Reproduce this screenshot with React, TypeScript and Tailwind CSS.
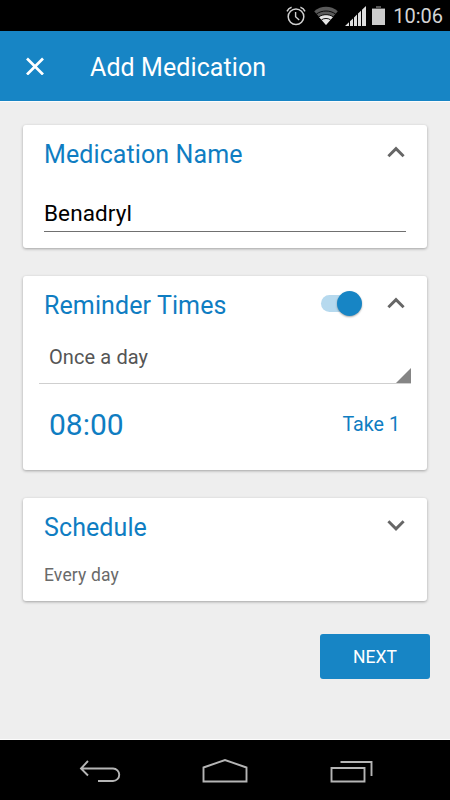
import type { ReactNode } from "react";

function StatusBar() {
  return (
    <div className="flex h-[31px] items-center justify-end bg-black pr-[7px] pt-px">
      {/* Alarm */}
      <svg className="mr-2 h-5 w-5" viewBox="0 0 20 20" fill="none" stroke="#d0d0d0" strokeWidth="1.5">
        <circle cx="10" cy="10.8" r="7.8" />
        <path d="M9.6 6v4.8l3.6 3.2" strokeWidth="1.4" />
        <path d="M1 5.4C1.8 3.5 3.5 1.8 5.6 1.2M19 5.4C18.2 3.5 16.5 1.8 14.4 1.2" />
      </svg>
      {/* Wifi */}
      <svg className="mr-[7px] h-5 w-6" viewBox="0 0 24 20">
        <path d="M12 19 0.2 5.2C7 -0.6 17 -0.6 23.8 5.2Z" fill="#5a5a5a" />
        <path d="M12 19 5 10.9C9 8 15 8 19 10.9Z" fill="#e6e6e6" />
        <path d="M2.4 8C8 4 16 4 21.6 8M5 10.7C9 8 15 8 19 10.7M7.5 13.8C10 12 14 12 16.5 13.8" fill="none" stroke="#000" strokeWidth="0.9" />
      </svg>
      {/* Signal */}
      <svg className="mr-[6px] h-5 w-[21px]" viewBox="0 0 21 20">
        <path d="M0 20 4 16.2V20ZM5 20V15.2L8 12.4V20ZM9 20V11.4L12 8.6V20ZM13 20V7.6L16 4.8V20ZM17 20V3.8L21 0V20Z" fill="#dedede" />
      </svg>
      {/* Battery */}
      <svg className="mr-2 h-5 w-[13px]" viewBox="0 0 13 20">
        <path d="M4 0h5v2h4v1.5H0V2h4Z" fill="#555" />
        <path d="M0 3H13V19H0Z" fill="#cccccc" />
      </svg>
      <span className="text-[20px] leading-[31px] text-[#d4d4d4]">10:06</span>
    </div>
  );
}

function Chevron({ open }: { open: boolean }) {
  return (
    <svg className="h-[12px] w-[18px]" viewBox="0 0 18 12" fill="none" stroke="#666666" strokeWidth="2.9">
      <path d={open ? "M1.4 10.2 9 2.6 16.6 10.2" : "M1.4 2.3 9 9.9 16.6 2.3"} />
    </svg>
  );
}

function Card({ className, children }: { className: string; children: ReactNode }) {
  return (
    <section className={`rounded-[3px] bg-white shadow-[0_1px_3px_rgba(0,0,0,0.32)] ${className}`}>
      {children}
    </section>
  );
}

function CardHeader({ title, open, children }: { title: string; open: boolean; children?: ReactNode }) {
  return (
    <div className="flex h-[60px] items-start pl-[21px] pr-[22px]">
      <h2 className="flex-1 text-[25px] leading-[60px] tracking-[0.1px] text-[#0f7dc2]">{title}</h2>
      <div className="flex h-[54px] items-center">
        {children}
        <Chevron open={open} />
      </div>
    </div>
  );
}

function Toggle() {
  return (
    <div className="mr-[25px] flex h-[26px] w-[41px] items-center justify-end">
      <div className="-mr-[20px] h-[17px] w-[36px] rounded-full bg-[#b6d9ee]" />
      <div className="relative h-[25px] w-[25px] rounded-full bg-[#1785c5] shadow-[0_1px_2px_rgba(0,0,0,0.35)]" />
    </div>
  );
}

export default function App() {
  return (
    <div className="flex h-[800px] w-[450px] flex-col overflow-hidden bg-[#eeeeee] font-['Roboto',sans-serif]">
      <StatusBar />

      <header className="flex h-[70px] items-center bg-[#1785c5] pl-[26px] text-white">
        <svg className="h-[18px] w-[18px]" viewBox="0 0 18 18" fill="none" stroke="currentColor" strokeWidth="2.7">
          <path d="M1 1.5 17 17.5M17 1.5 1 17.5" />
        </svg>
        <h1 className="ml-[46px] pt-[4px] text-[25px] leading-[70px] tracking-[0.09px]">Add Medication</h1>
      </header>

      <main className="flex-1 border-y border-white/80 px-[23px] pt-[23px]">
        <Card className="h-[123px]">
          <CardHeader title="Medication Name" open />
          <div className="mx-[21px] h-[47px] border-b border-[#707070] pt-[8px] text-[22.5px] leading-[41px] tracking-[0.1px] text-black">
            Benadryl
          </div>
        </Card>

        <Card className="mt-7 h-[194px]">
          <CardHeader title="Reminder Times" open>
            <Toggle />
          </CardHeader>
          <div className="mx-4 flex h-[48px] items-end justify-between border-b border-[#cfcfcf] pl-[10px]">
            <span className="text-[20px] leading-[52px] tracking-[0.1px] text-[#555555]">Once a day</span>
            <svg className="h-[15px] w-[15px]" viewBox="0 0 15 15">
              <path d="M15 0V15H0Z" fill="#858585" />
            </svg>
          </div>
          <div className="flex h-[82px] items-center justify-between pl-[26px] pr-[27px] text-[#0f7dc2]">
            <span className="pb-[2px] text-[30px]">08:00</span>
            <span className="text-[19.7px]">Take 1</span>
          </div>
        </Card>

        <Card className="mt-7 h-[103px]">
          <CardHeader title="Schedule" open={false} />
          <p className="pl-[21px] text-[17.5px] leading-[34px] tracking-[0.15px] text-[#6a6a6a]">Every day</p>
        </Card>

        <div className="-mr-[3px] mt-[33px] flex justify-end">
          <button className="h-[45px] w-[110px] rounded-[3px] bg-[#1785c5] pt-[2px] text-[17.5px] text-white">NEXT</button>
        </div>
      </main>

      <nav className="flex h-[60px] items-center bg-black pl-[79px] pt-[3px]">
        <svg className="h-[26px] w-[42px]" viewBox="0 0 42 26" fill="none" stroke="#b5b5b5" strokeWidth="1.9">
          <path d="M9 2 2 9.5 9 16.5M2 9.5H34A6.2 6.2 0 0 1 34 22H19" />
        </svg>
        <svg className="ml-[80px] h-[26px] w-[48px]" viewBox="0 0 48 26" fill="none" stroke="#b5b5b5" strokeWidth="1.9">
          <path d="M2.5 8.5 24 1 45.5 8.5V22.5H2.5Z" />
        </svg>
        <svg className="ml-[80px] h-[26px] w-[44px]" viewBox="0 0 44 26" fill="none" stroke="#b5b5b5" strokeWidth="1.9">
          <path d="M2.5 9H35.5V22.5H2.5ZM11.5 3H42.5V17" />
        </svg>
      </nav>
    </div>
  );
}
